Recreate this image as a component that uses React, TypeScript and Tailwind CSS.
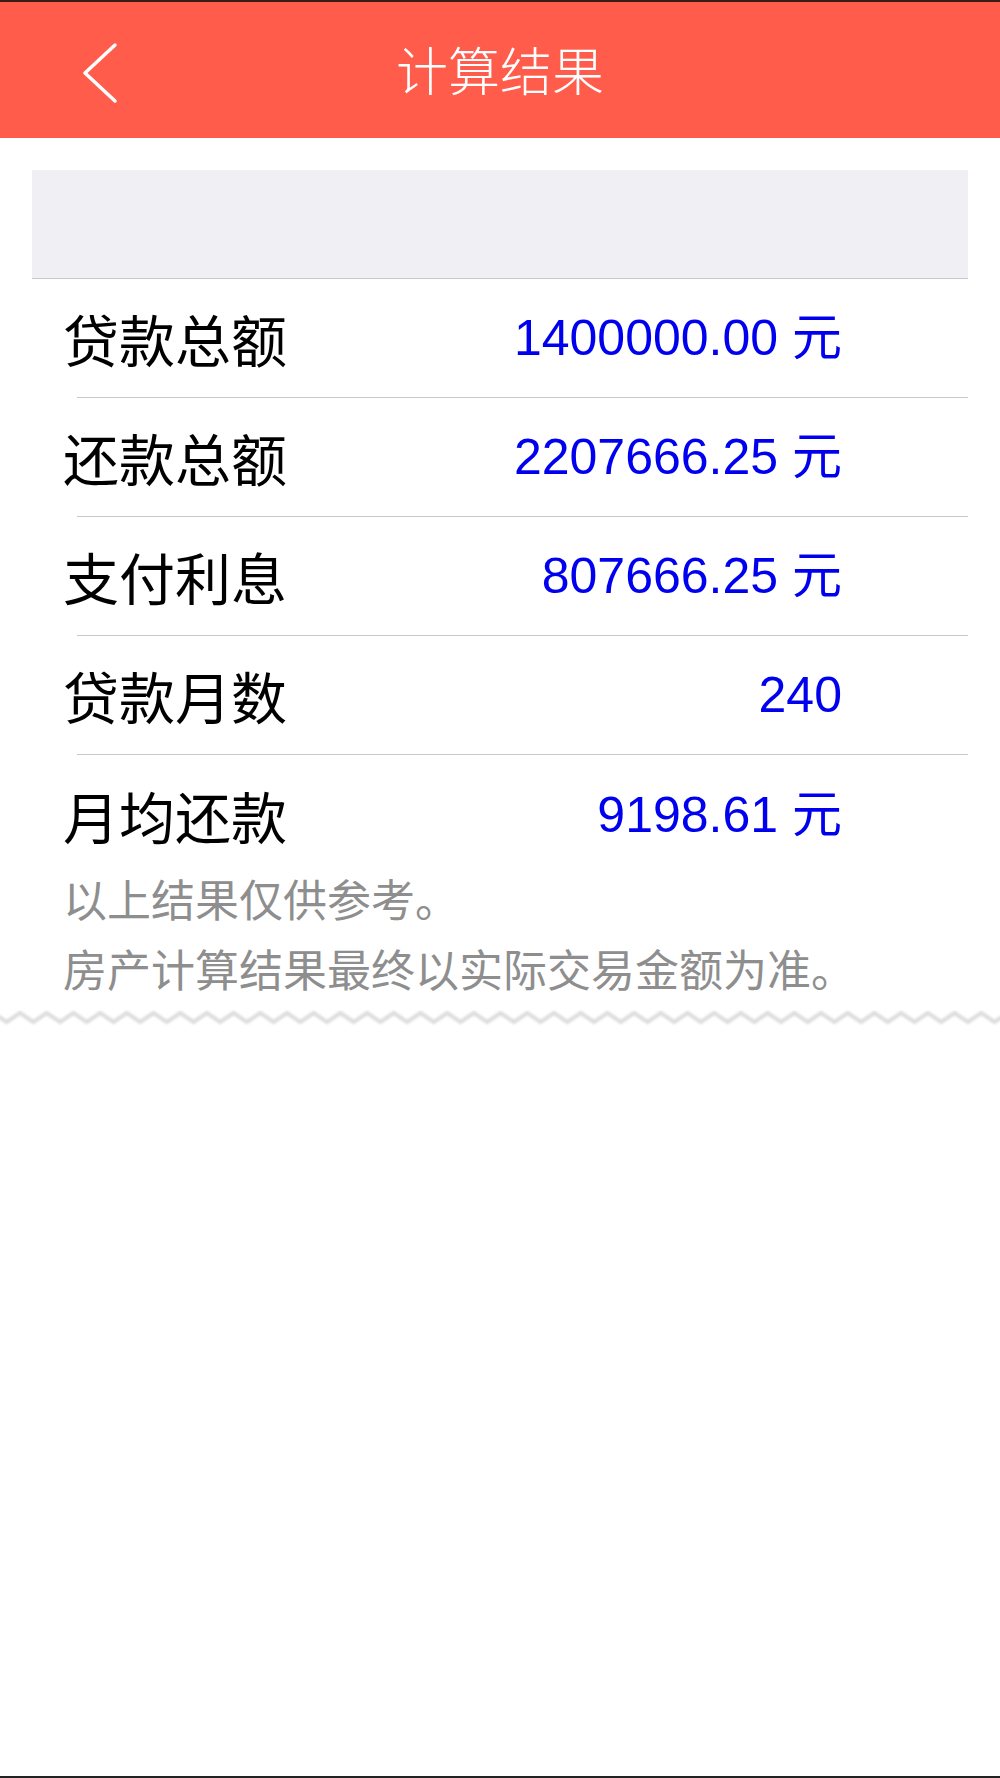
const ROWS = [
  { label: "贷款总额", value: "1400000.00 元" },
  { label: "还款总额", value: "2207666.25 元" },
  { label: "支付利息", value: "807666.25 元" },
  { label: "贷款月数", value: "240" },
  { label: "月均还款", value: "9198.61 元" },
];

const CJK = "font-['Noto_Sans_CJK_SC',sans-serif]";

function Zigzag() {
  const period = 26.7;
  const pts: string[] = [];
  for (let x = 20 - period * 2; x <= 1000 + period; x += period) {
    pts.push(`${x.toFixed(1)},3`, `${(x + period / 2).toFixed(1)},12`);
  }
  return (
    <svg width="1000" height="18" viewBox="0 0 1000 18" className="block">
      <defs>
        <filter id="soft" x="-5%" y="-50%" width="110%" height="200%">
          <feGaussianBlur stdDeviation="1.3" />
        </filter>
      </defs>
      <polyline
        points={pts.join(" ")}
        fill="none"
        stroke="#dedede"
        strokeWidth="4"
        filter="url(#soft)"
      />
    </svg>
  );
}

export default function App() {
  return (
    <div className="flex h-[1778px] w-[1000px] flex-col overflow-hidden border-b-2 border-[#222] bg-white">
      {/* Barra de título */}
      <header className="relative flex h-[138px] shrink-0 items-center justify-center border-t-2 border-[#3a1c16] bg-[#ff5c4b]">
        <button className="absolute left-[70px] top-[36px] flex h-[70px] w-[60px] items-center justify-center">
          <svg width="40" height="64" viewBox="0 0 40 64" fill="none">
            <path d="M35 4 L5 32 L35 60" stroke="white" strokeWidth="3.5" strokeLinecap="round" strokeLinejoin="round" />
          </svg>
        </button>
        <h1 className={`${CJK} -mt-[2px] text-[52px] font-light leading-none text-white`}>计算结果</h1>
      </header>

      <main className="px-8 pt-8">
        <div className="h-[109px] border-b border-[#c8c7cc] bg-[#efeff4]" />

        <ul>
          {ROWS.map((row, i) => (
            <li
              key={row.label}
              className={`flex h-[119px] items-center justify-between pl-[31px] pr-[126px] ${
                i < ROWS.length - 1 ? "border-b-[1.5px] border-[#c8c7cc] ml-[45px] !pl-0" : ""
              }`}
            >
              <span
                className={`${CJK} text-[56px] leading-none text-black ${i < ROWS.length - 1 ? "-ml-[14px]" : ""}`}
              >
                {row.label}
              </span>
              <span className="font-['Liberation_Sans','Noto_Sans_CJK_SC',sans-serif] text-[50px] leading-none text-[#0000ee]">
                {row.value}
              </span>
            </li>
          ))}
        </ul>

        <div className={`${CJK} -mt-[11px] pl-[31px] text-[44px] leading-[70px] text-[#8e8e8e]`}>
          <p>以上结果仅供参考。</p>
          <p>房产计算结果最终以实际交易金额为准。</p>
        </div>
      </main>

      <div className="mt-[7px]">
        <Zigzag />
      </div>
    </div>
  );
}
